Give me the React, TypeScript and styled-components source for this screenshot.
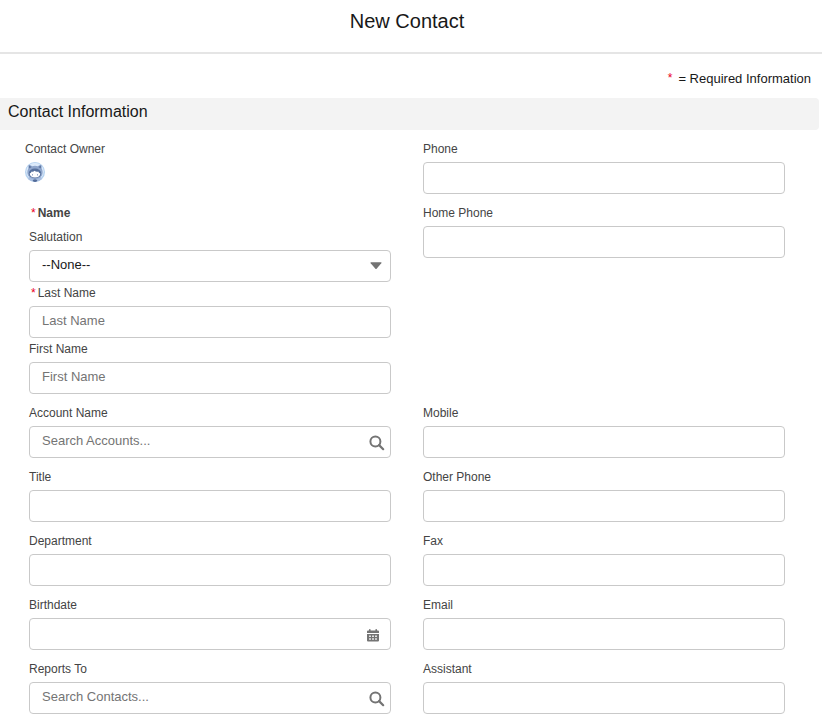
import React from "react";
import styled, { createGlobalStyle, css } from "styled-components";

const GlobalStyle = createGlobalStyle`
  * { box-sizing: border-box; }
  body {
    margin: 0;
    background: #fff;
    color: #181818;
    font-family: "Liberation Sans", Arial, sans-serif;
    font-size: 13px;
    overflow: hidden;
  }
`;

const Modal = styled.main`
  width: 822px;
  height: 723px;
  overflow: hidden;
`;

const Header = styled.header`
  height: 54px;
  border-bottom: 2px solid #e5e5e5;
  text-align: center;
`;

const Title = styled.h1`
  margin: 0;
  padding: 9px 8px 0 0;
  font-size: 20px;
  font-weight: 400;
  line-height: 25px;
`;

const Legend = styled.div`
  height: 44px;
  padding: 15px 11px 0 0;
  display: flex;
  justify-content: flex-end;
  gap: 6px;
  line-height: 20px;
`;

const Star = styled.abbr`
  color: #ea001e;
  font-size: 12px;
  font-weight: 400;
  text-decoration: none;
`;

const LegendStar = styled(Star)`
  line-height: 18px;
`;

const SectionTitle = styled.h2`
  margin: 0 3px 8px 0;
  height: 32px;
  padding-left: 8px;
  border-radius: 0 4px 4px 0;
  background: #f3f3f3;
  font-size: 16px;
  font-weight: 400;
  line-height: 28px;
`;

const Fields = styled.div`
  display: grid;
  grid-template-columns: 362px 362px;
  column-gap: 32px;
  padding-left: 29px;
`;

const Cell = styled.div`
  min-height: 64px;
`;

const OwnerCell = styled(Cell)`
  margin-left: -4px;
`;

const NameGroup = styled.fieldset`
  border: 0;
  margin: 0;
  padding: 0;
  height: 200px;
`;

const NameLegend = styled.div`
  height: 24px;
  padding-left: 2px;
  color: #444;
  font-size: 12px;
  font-weight: 700;
  line-height: 22px;
  display: flex;
  gap: 2px;
`;

const Compact = styled.div`
  height: 56px;
`;

const Label = styled.label<{ $required?: boolean }>`
  display: flex;
  gap: 2px;
  height: 24px;
  padding-left: ${(p) => (p.$required ? "2px" : "0")};
  color: #444;
  font-size: 12px;
  line-height: 22px;
`;

const control = css`
  display: block;
  width: 100%;
  height: 32px;
  border: 1px solid #c9c9c9;
  border-radius: 4px;
  background: #fff;
  padding: 0 40px 4px 12px;
  font: inherit;
  color: #181818;
  outline: none;
`;

const Input = styled.input`
  ${control}
  &::placeholder { color: #747474; opacity: 1; }
`;

const Select = styled.select`
  ${control}
  appearance: none;
`;

const Control = styled.div`
  position: relative;
`;

const Adornment = styled.span<{ $right: number; $top: number }>`
  position: absolute;
  right: ${(p) => p.$right}px;
  top: ${(p) => p.$top}px;
  display: flex;
  color: #747474;
  pointer-events: none;
`;

const Avatar = styled.svg`
  display: block;
`;

const SearchIcon = () => (
  <svg width="16" height="16" viewBox="0 0 16 16" fill="none" stroke="currentColor">
    <circle cx="6.4" cy="6.4" r="5" strokeWidth="2" />
    <path d="M10.1 10.1 14.2 14.2" strokeWidth="2.2" strokeLinecap="round" />
  </svg>
);

const CalendarIcon = () => (
  <svg width="12" height="13" viewBox="0 0 12 13" fill="currentColor">
    <path d="M0 4V2.4Q0 1.4 1 1.4H2V.8Q2 0 2.8 0T3.6 .8V1.4H8.4V.8Q8.4 0 9.2 0T10 .8V1.4H11Q12 1.4 12 2.4V4Z" />
    <path
      fillRule="evenodd"
      d="M0 5H12V11.4Q12 12.4 11 12.4H1Q0 12.4 0 11.4ZM2.2 6.4V8H3.8V6.4ZM5.2 6.4V8H6.8V6.4ZM8.2 6.4V8H9.8V6.4ZM2.2 9.2V10.8H3.8V9.2ZM5.2 9.2V10.8H6.8V9.2ZM8.2 9.2V10.8H9.8V9.2Z"
    />
  </svg>
);

const CaretIcon = () => (
  <svg width="12" height="8" viewBox="0 0 12 8" fill="currentColor">
    <path d="M1 .3H11Q12 .4 11.3 1.3L6.6 6.7Q6 7.3 5.4 6.7L.7 1.3Q0 .4 1 .3Z" />
  </svg>
);

const OwnerAvatar = () => (
  <Avatar width="20" height="20" viewBox="0 0 20 20" role="img" aria-label="Owner">
    <defs>
      <clipPath id="owner-circle">
        <circle cx="10" cy="10" r="10" />
      </clipPath>
    </defs>
    <g clipPath="url(#owner-circle)">
      <path fill="#b5d2f0" d="M0 0H20V20H0Z" />
      <circle cx="10" cy="9.5" r="8.8" fill="#dceafa" />
      <path fill="#a9bfe0" d="M4 15H16L18 20H2Z" />
      <path
        fill="#8fa6cc"
        d="M3.4 3.2Q4 2.3 5 2.9L7.2 4.2Q10 3.5 12.8 4.2L15 2.9Q16.1 2.3 16.6 3.2L16.7 6.6Q18.7 10.5 16.6 14Q14.3 17 10 17T3.4 14Q1.3 10.5 3.3 6.6Z"
      />
      <path fill="#5b739f" d="M4 3.6 6.6 5 4.2 6.6ZM16 3.6 13.4 5 15.8 6.6Z" />
      <ellipse cx="10" cy="11.4" rx="6.2" ry="4.9" fill="#56709c" />
      <path
        fill="#fff"
        d="M4.7 11.6Q6.2 11 6.7 9.4Q8.3 10.1 9.5 8.7Q11.3 10.1 13.3 9.4Q13.8 11 15.3 11.6Q15 15.6 10 15.6Q5 15.6 4.7 11.6Z"
      />
      <circle cx="7.5" cy="12.8" r=".6" fill="#607aa8" />
      <circle cx="12.5" cy="12.8" r=".6" fill="#607aa8" />
      <path fill="#526b98" d="M7.6 18.1 10 17.3 12.4 18.1 11.5 20H8.5Z" />
    </g>
  </Avatar>
);

type FieldProps = {
  label: string;
  placeholder?: string;
  required?: boolean;
  icon?: "search" | "calendar";
};

const Field = ({ label, placeholder, required, icon }: FieldProps) => {
  const id = label.toLowerCase().replace(/ /g, "-");
  return (
    <>
      <Label htmlFor={id} $required={required}>
        {required && <Star title="required">*</Star>}
        {label}
      </Label>
      <Control>
        <Input id={id} placeholder={placeholder} />
        {icon === "search" && (
          <Adornment $right={6} $top={9}>
            <SearchIcon />
          </Adornment>
        )}
        {icon === "calendar" && (
          <Adornment $right={12} $top={11}>
            <CalendarIcon />
          </Adornment>
        )}
      </Control>
    </>
  );
};

const rows: [FieldProps, FieldProps][] = [
  [{ label: "Account Name", placeholder: "Search Accounts...", icon: "search" }, { label: "Mobile" }],
  [{ label: "Title" }, { label: "Other Phone" }],
  [{ label: "Department" }, { label: "Fax" }],
  [{ label: "Birthdate", icon: "calendar" }, { label: "Email" }],
  [{ label: "Reports To", placeholder: "Search Contacts...", icon: "search" }, { label: "Assistant" }],
];

export default function App() {
  return (
    <Modal>
      <GlobalStyle />
      <Header>
        <Title>New Contact</Title>
      </Header>
      <Legend>
        <LegendStar>*</LegendStar>
        <span>= Required Information</span>
      </Legend>
      <SectionTitle>Contact Information</SectionTitle>
      <Fields>
        <OwnerCell>
          <Label as="div">Contact Owner</Label>
          <OwnerAvatar />
        </OwnerCell>
        <Cell>
          <Field label="Phone" />
        </Cell>
        <NameGroup>
          <NameLegend>
            <Star>*</Star>
            Name
          </NameLegend>
          <Compact>
            <Label htmlFor="salutation">Salutation</Label>
            <Control>
              <Select id="salutation">
                <option>--None--</option>
              </Select>
              <Adornment $right={9} $top={12}>
                <CaretIcon />
              </Adornment>
            </Control>
          </Compact>
          <Compact>
            <Field label="Last Name" placeholder="Last Name" required />
          </Compact>
          <Compact>
            <Field label="First Name" placeholder="First Name" />
          </Compact>
        </NameGroup>
        <Cell>
          <Field label="Home Phone" />
        </Cell>
        {rows.map(([left, right]) => (
          <React.Fragment key={left.label}>
            <Cell>
              <Field {...left} />
            </Cell>
            <Cell>
              <Field {...right} />
            </Cell>
          </React.Fragment>
        ))}
      </Fields>
    </Modal>
  );
}
